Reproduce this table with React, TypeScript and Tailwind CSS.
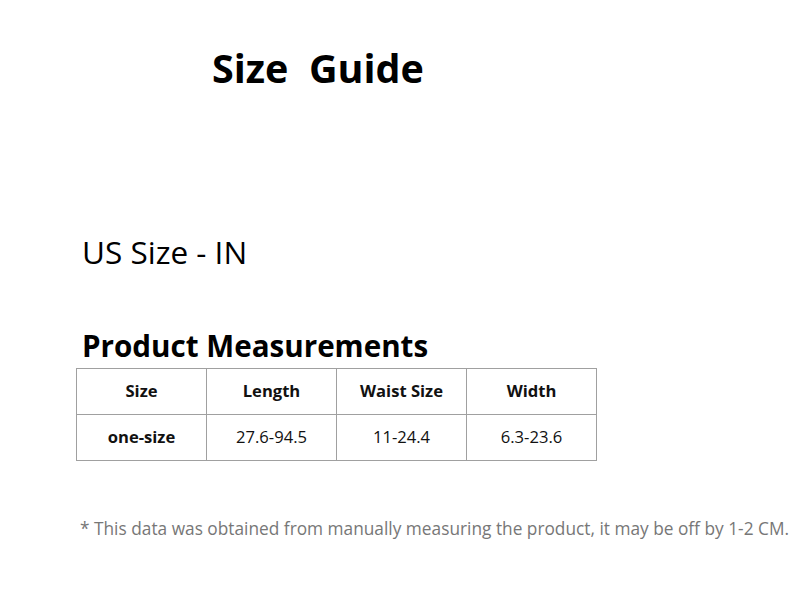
export default function App() {
  const font = { fontFamily: '"Open Sans", "Noto Sans", sans-serif' };
  return (
    <div className="w-[800px] h-[600px] bg-white text-black overflow-hidden" style={font}>
      <h1 className="pl-[212px] pt-[42px] text-[39.5px] font-bold leading-[52px] whitespace-pre">Size  Guide</h1>
      <div className="pl-[82px] pt-[136px] text-[31.5px] leading-[44px]">US Size - IN</div>
      <div className="pl-[82px] pt-[52px] text-[29.6px] font-bold leading-[40px]">Product Measurements</div>
      <table className="ml-[76px] mt-[2px] border-collapse text-[16.6px] text-[#111]">
        <tbody>
          <tr className="h-[46px]">
            {["Size", "Length", "Waist Size", "Width"].map((t) => (
              <th key={t} className="w-[130px] border border-[#a0a0a0] font-bold text-center">{t}</th>
            ))}
          </tr>
          <tr className="h-[46px]">
            <td className="w-[130px] border border-[#a0a0a0] font-bold text-center">one-size</td>
            {["27.6-94.5", "11-24.4", "6.3-23.6"].map((t) => (
              <td key={t} className="w-[130px] border border-[#a0a0a0] text-center">{t}</td>
            ))}
          </tr>
        </tbody>
      </table>
      <div className="pl-[80px] pt-[56px] text-[17.3px] text-[#777] leading-[24px]">* This data was obtained from manually measuring the product, it may be off by 1-2 CM.</div>
    </div>
  );
}
